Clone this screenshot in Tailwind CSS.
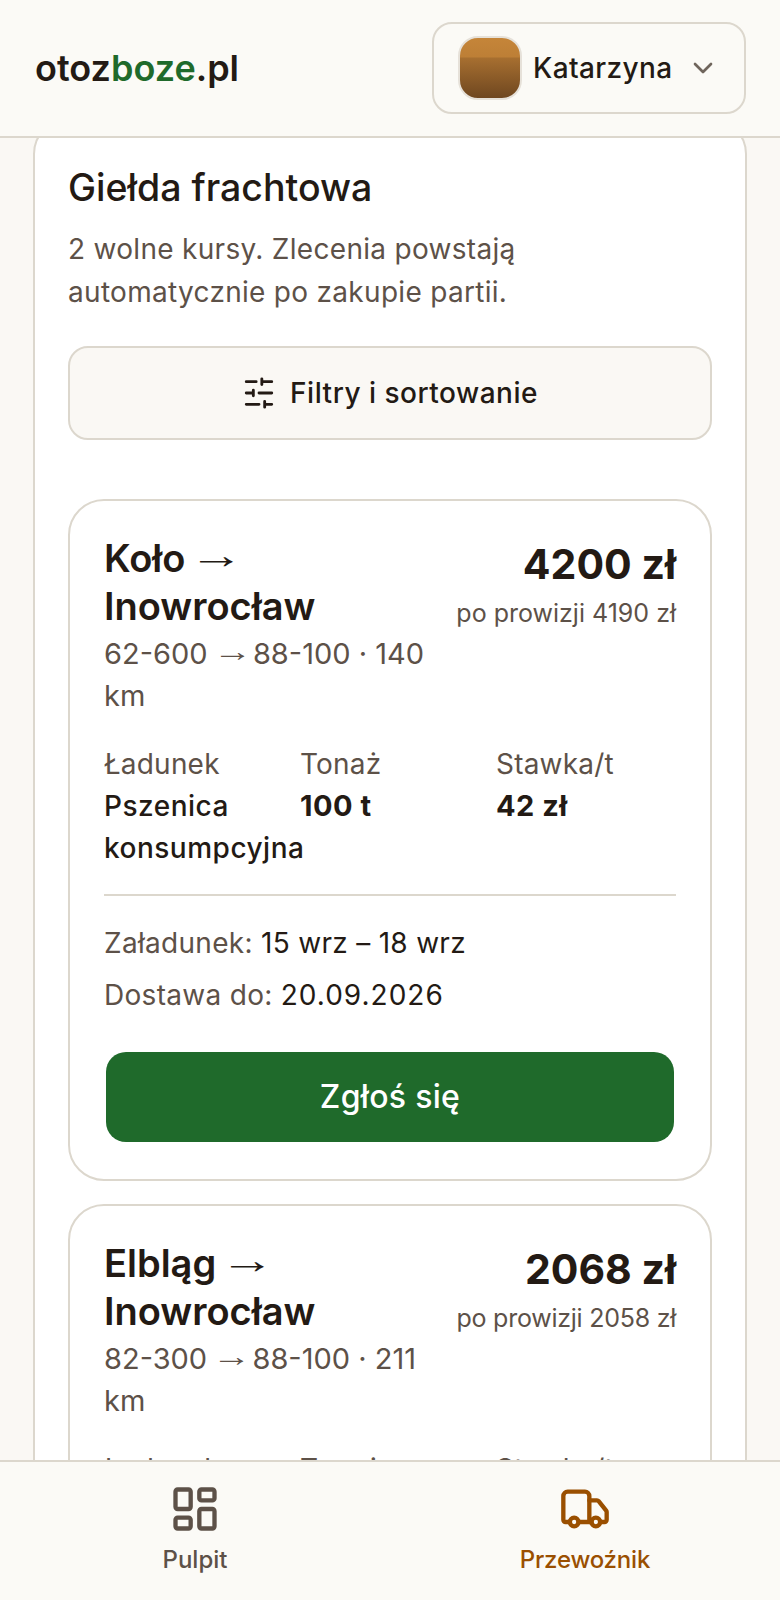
<!DOCTYPE html>
<html lang="pl">
<head>
<meta charset="utf-8">
<script src="https://cdn.jsdelivr.net/npm/@tailwindcss/browser@4"></script>
</head>
<body class="bg-[#faf8f4]">
<div class="relative w-[780px] h-[1600px] overflow-hidden font-['Inter','Liberation_Sans',sans-serif] text-[#231a14]">
  <header class="absolute top-0 left-0 right-0 z-10 h-[138px] bg-[#fbfaf6] border-b-2 border-[#dcd7cd] flex items-center justify-between pl-[35px] pr-[34px]">
    <div class="text-[36px] font-semibold">otoz<span class="text-[#1f6a2b]">boze</span>.pl</div>
    <div class="w-[314px] h-[92px] rounded-[20px] border-2 border-[#dcd7cd] flex items-center pl-[24px] gap-[11px]">
      <div class="w-[64px] h-[64px] rounded-[20px] border-2 border-[#e6e1d9] bg-[linear-gradient(to_bottom,#c58539_0%,#bd7f36_32%,#a76f30_33%,#6f4720_100%)]"></div>
      <span class="text-[28px] font-medium tracking-[0.4px]">Katarzyna</span>
      <svg class="ml-[3px] w-[32px] h-[32px] text-[#6f655c]" viewBox="0 0 24 24" fill="none" stroke="currentColor" stroke-width="2" stroke-linecap="round" stroke-linejoin="round"><path d="m6 9 6 6 6-6"/></svg>
    </div>
  </header>

  <main class="pt-[118px] px-[33px]">
    <section class="bg-white border-2 border-[#dcd7cd] rounded-[36px] px-[33px] pt-[46px]">
      <h1 class="text-[37.5px] leading-[44px] font-medium">Giełda frachtowa</h1>
      <p class="mt-[18px] max-w-[560px] text-[28px] leading-[43px] tracking-[0.3px] text-[#5d5148]">2 wolne kursy. Zlecenia powstają automatycznie po zakupie partii.</p>
      <button class="mt-[32px] w-full h-[94px] rounded-[20px] border-2 border-[#dcd7cd] bg-[#faf8f4] flex items-center justify-center gap-[14px] text-[28px] font-medium tracking-[0.5px]">
        <svg class="w-[34px] h-[34px]" viewBox="0 0 24 24" fill="none" stroke="currentColor" stroke-width="2" stroke-linecap="round" stroke-linejoin="round"><path d="M21 4h-7M10 4H3M21 12h-9M8 12H3M21 20h-5M12 20H3M14 2v4M8 10v4M16 18v4"/></svg>
        Filtry i sortowanie
      </button>

      <article class="mt-[59px] rounded-[36px] border-2 border-[#dcd7cd] px-[34px] pt-[33px] pb-[37px]">
        <div class="flex justify-between">
          <div class="w-[320px]">
            <h2 class="text-[38px] leading-[48px] font-semibold">Koło <span class="inline-block font-['Liberation_Sans'] font-bold leading-none scale-x-[1.45] translate-x-[2px] -translate-y-[4px]">→</span> Inowrocław</h2>
            <p class="mt-[3px] text-[29px] leading-[42px] text-[#5d5148]">62-600 <span class="inline-block font-['Liberation_Sans'] leading-none scale-x-[1.35] translate-x-[2px] -translate-y-[3px]">→</span> 88-100 · 140 km</p>
          </div>
          <div class="text-right pt-[2px]">
            <div class="text-[41px] leading-[56px] font-bold">4200 zł</div>
            <div class="mt-[3px] text-[25px] leading-[36px] text-[#5d5148]">po prowizji 4190 zł</div>
          </div>
        </div>
        <div class="mt-[26px] grid grid-cols-3 gap-x-4 text-[28px] leading-[42px] tracking-[0.2px]">
          <div><div class="text-[#5d5148]">Ładunek</div><div class="font-medium tracking-[0.5px]">Pszenica konsumpcyjna</div></div>
          <div><div class="text-[#5d5148]">Tonaż</div><div class="font-bold text-[29px] tracking-[0.5px]">100 t</div></div>
          <div><div class="text-[#5d5148]">Stawka/t</div><div class="font-bold text-[29px] tracking-[0.5px]">42 zł</div></div>
        </div>
        <div class="mt-[25px] border-t-2 border-[#dcd7cd] pt-[21px] text-[28px] leading-[52px] tracking-[0.3px]">
          <div><span class="text-[#5d5148]">Załadunek:</span> 15 wrz – 18 wrz</div>
          <div><span class="text-[#5d5148]">Dostawa do:</span> <span class="tracking-[1px]">20.09.2026</span></div>
        </div>
        <button class="mt-[31px] ml-[2px] w-[568px] block h-[90px] rounded-[20px] bg-[#1f6a2b] text-white text-[32px] font-medium tracking-[0.3px]">Zgłoś się</button>
      </article>

      <article class="mt-[23px] rounded-[36px] border-2 border-[#dcd7cd] px-[34px] pt-[33px] pb-[37px]">
        <div class="flex justify-between">
          <div class="w-[320px]">
            <h2 class="text-[38px] leading-[48px] font-semibold">Elbląg <span class="inline-block font-['Liberation_Sans'] font-bold leading-none scale-x-[1.45] translate-x-[2px] -translate-y-[4px]">→</span> Inowrocław</h2>
            <p class="mt-[3px] text-[29px] leading-[42px] text-[#5d5148]">82-300 <span class="inline-block font-['Liberation_Sans'] leading-none scale-x-[1.35] translate-x-[2px] -translate-y-[3px]">→</span> 88-100 · 211 km</p>
          </div>
          <div class="text-right pt-[2px]">
            <div class="text-[41px] leading-[56px] font-bold">2068 zł</div>
            <div class="mt-[3px] text-[25px] leading-[36px] tracking-[-0.25px] text-[#5d5148]">po prowizji 2058 zł</div>
          </div>
        </div>
        <div class="mt-[26px] grid grid-cols-3 gap-x-4 text-[28px] leading-[42px] tracking-[0.2px]">
          <div><div class="text-[#5d5148]">Ładunek</div></div>
          <div><div class="text-[#5d5148]">Tonaż</div></div>
          <div><div class="text-[#5d5148]">Stawka/t</div></div>
        </div>
      </article>
    </section>
  </main>

  <nav class="absolute bottom-0 left-0 right-0 h-[140px] bg-[#fbfaf6] border-t-2 border-[#dcd7cd] grid grid-cols-2">
    <div class="flex flex-col items-center pt-[21px] text-[#5d5148]">
      <svg class="w-[52px] h-[52px]" viewBox="0 0 24 24" fill="none" stroke="currentColor" stroke-width="2" stroke-linecap="round" stroke-linejoin="round"><rect width="7" height="9" x="3" y="3" rx="1"/><rect width="7" height="5" x="14" y="3" rx="1"/><rect width="7" height="9" x="14" y="12" rx="1"/><rect width="7" height="5" x="3" y="16" rx="1"/></svg>
      <span class="mt-[7px] text-[24px] font-medium">Pulpit</span>
    </div>
    <div class="flex flex-col items-center pt-[21px] text-[#9a4f00]">
      <svg class="w-[52px] h-[52px]" viewBox="0 0 24 24" fill="none" stroke="currentColor" stroke-width="2" stroke-linecap="round" stroke-linejoin="round"><path d="M14 18V6a2 2 0 0 0-2-2H4a2 2 0 0 0-2 2v11a1 1 0 0 0 1 1h2"/><path d="M15 18H9"/><path d="M19 18h2a1 1 0 0 0 1-1v-3.65a1 1 0 0 0-.22-.624l-3.48-4.35A1 1 0 0 0 17.52 8H14"/><circle cx="17" cy="18" r="2"/><circle cx="7" cy="18" r="2"/></svg>
      <span class="mt-[7px] text-[24px] font-medium tracking-[-0.2px]">Przewoźnik</span>
    </div>
  </nav>
</div>
</body>
</html>
